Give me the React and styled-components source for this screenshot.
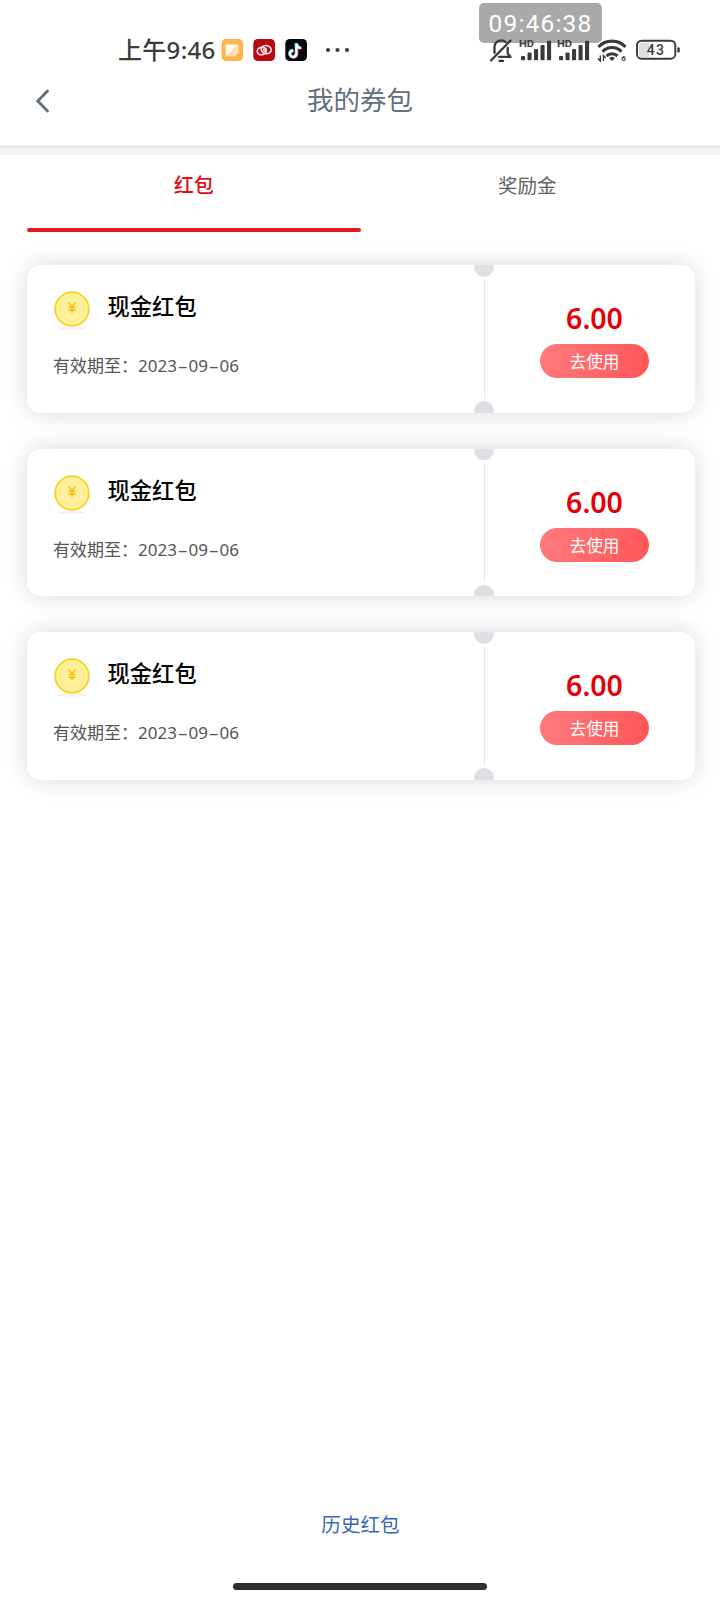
import React from "react";
import styled, { createGlobalStyle, css } from "styled-components";

const GlobalStyle = createGlobalStyle`
	* {
		box-sizing: border-box;
	}

	body {
		margin: 0;
		background: #fff;
		font-family: "Noto Sans", "Noto Sans CJK SC", sans-serif;
	}

	button {
		border: 0;
		padding: 0;
		background: none;
		font-family: inherit;
	}
`;

const Page = styled.div`
	display: flex;
	flex-direction: column;
	width: 720px;
	height: 1600px;
	overflow: hidden;
	background: #fff;
`;

const StatusBar = styled.div`
	position: relative;
	display: flex;
	justify-content: space-between;
	align-items: flex-end;
	height: 64px;
	padding: 0 40px 0 118px;
`;

const StatusGroup = styled.div`
	display: flex;
	align-items: center;
	height: 28px;
`;

const StatusTime = styled.span`
	width: 103px;
	color: #3c3c3c;
	font-size: 24px;
	font-weight: 500;
	letter-spacing: 0.3px;
	line-height: 28px;
	white-space: nowrap;
`;

const AppIcons = styled.svg`
	display: block;
	width: 130px;
	height: 28px;
`;

const SignalIcons = styled.svg`
	position: relative;
	z-index: 1;
	display: block;
	width: 192px;
	height: 28px;
	font-family: Roboto, sans-serif;
`;

// Floating clock overlay, sits over the status bar
const ClockBadge = styled.div`
	position: absolute;
	top: 3px;
	left: 479px;
	width: 123px;
	height: 40px;
	padding-top: 7px;
	border-radius: 5px;
	background: #a9a9a9;
	color: #fff;
	font-family: Roboto, sans-serif;
	font-size: 24.5px;
	letter-spacing: 1.2px;
	line-height: 28px;
	text-align: center;
	white-space: nowrap;
`;

const NavBar = styled.header`
	display: grid;
	grid-template-columns: 84px 1fr 84px;
	align-items: center;
	height: 81px;
	padding-bottom: 9px;
`;

const BackButton = styled.button`
	display: flex;
	padding: 1px 0 0 34px;

	svg {
		display: block;
	}
`;

const Title = styled.h1`
	margin: 0;
	color: #627180;
	font-size: 26.5px;
	font-weight: 400;
	line-height: 36px;
	text-align: center;
`;

const Band = styled.div`
	height: 10px;
	background: linear-gradient(#eeeeee 3px, #f3f3f3 4px);
`;

const Tabs = styled.nav`
	display: grid;
	grid-template-columns: 1fr 1fr;
	height: 77px;
	padding: 0 26px 0 27px;
`;

const Tab = styled.button`
	display: flex;
	flex-direction: column;
	align-items: center;
	justify-content: space-between;
	height: 76.5px;
	color: #626262;
	font-size: 19.5px;
	line-height: 62px;

	${({ $active }) =>
		$active &&
		css`
			color: #de1015;
			font-size: 20px;
			font-weight: 500;
		`}
`;

const TabLine = styled.span`
	width: 100%;
	height: 3.5px;
	border-radius: 2px;
	background: #e01a1f;
`;

const CouponList = styled.main`
	display: flex;
	flex: 1;
	flex-direction: column;
	gap: 36px;
	padding: 33px 25.5px 0 27px;
`;

const Card = styled.article`
	display: grid;
	grid-template-columns: 446.5px 20px 1fr;
	height: 147.6px;
	border-radius: 14px;
	background: #fff;
	box-shadow: 0 0 23px rgba(0, 0, 0, 0.15);
`;

const CardInfo = styled.div`
	padding: 23px 0 0 26px;
`;

const CardHead = styled.div`
	display: flex;
	gap: 16.5px;
	height: 44px;
`;

const CardTitle = styled.h2`
	margin: 0;
	color: #050505;
	font-size: 22.3px;
	font-weight: 500;
	line-height: 38px;
`;

const Validity = styled.p`
	display: flex;
	margin: 21px 0 0;
	color: #555;
	font-size: 17px;
	line-height: 26px;
	white-space: nowrap;
`;

const Dash = styled.span`
	display: inline-block;
	width: 11.6px;
	text-align: center;
	transform: scaleX(1.9);
`;

const Perforation = styled.div`
	display: flex;
	flex-direction: column;
	align-items: center;
	justify-content: space-between;
`;

const Notch = styled.span`
	width: 20px;
	height: 11.5px;
	background: #dddfe4;
	border-radius: ${({ $end }) => ($end ? "10px 10px 2px 2px" : "2px 2px 10px 10px")};
`;

const Line = styled.span`
	width: 1px;
	height: 120px;
	margin-left: 1px;
	background: #e6e7ea;
`;

const CardAction = styled.div`
	display: flex;
	flex-direction: column;
	align-items: center;
	padding: 35px 0 0 1px;
`;

const Amount = styled.strong`
	height: 44px;
	color: #e60008;
	font-size: 28.5px;
	font-weight: 600;
	line-height: 37px;
`;

const UseButton = styled.button`
	width: 109px;
	height: 34px;
	border-radius: 17px;
	background: linear-gradient(100deg, #ff7b7d, #ff5658);
	color: #fff;
	font-size: 16.7px;
	line-height: 35px;
`;

const Footer = styled.footer`
	display: flex;
	flex-direction: column;
	align-items: center;
	padding-bottom: 10.5px;
`;

const HistoryLink = styled.button`
	display: flex;
	height: 73px;
	padding-left: 1px;
	color: #3768b5;
	font-size: 19.6px;
	line-height: 30px;
`;

const HomeBar = styled.div`
	width: 254px;
	height: 6.5px;
	border-radius: 4px;
	background: #303030;
`;

const coupons = [
	{ id: 1, title: "现金红包", date: "2023-09-06", amount: "6.00" },
	{ id: 2, title: "现金红包", date: "2023-09-06", amount: "6.00" },
	{ id: 3, title: "现金红包", date: "2023-09-06", amount: "6.00" },
];

function RunningApps() {
	return (
		<AppIcons viewBox='221 36 130 28'>
			<defs>
				<linearGradient id='note' x1='0' y1='0' x2='1' y2='1'>
					<stop offset='0' stopColor='#fff' />
					<stop offset='1' stopColor='#fff0d8' />
				</linearGradient>
			</defs>
			<rect x='221.5' y='39' width='21.5' height='22' rx='4.5' fill='#ffb450' />
			<path d='M238.500 44.500v8.500l-3.500 3.500h-9z' fill='#ffd294' />
			<path d='M225.500 44.500h13L226 57z' fill='url(#note)' />
			<path d='M238.500 44.500v8l-3.500 3.500h-6z' fill='#ffe2b8' />
			<rect x='253.3' y='39' width='21.7' height='22' rx='4.5' fill='#b80812' />
			<g fill='none' stroke='#ffeaea' strokeWidth='1.6'>
				<ellipse cx='261.8' cy='51' rx='4.6' ry='3.7' transform='rotate(-12 261.800 51)' />
				<ellipse cx='266.2' cy='49.6' rx='5' ry='4' transform='rotate(12 266.200 49.600)' />
				<circle cx='264.8' cy='50' r='1.3' />
			</g>
			<rect x='285.3' y='39' width='21.7' height='22' rx='4.5' fill='#07070f' />
			<g fill='none' strokeWidth='2.3'>
				<path d='M295.800 43v10.300a3.300 3.300 0 1 1-3.300-3.300M295.800 43q.5 4 4.500 4.500' stroke='#25e4e2' />
				<path d='M297.200 44v10.300a3.300 3.300 0 1 1-3.300-3.300M297.200 44q.5 4 4.500 4.500' stroke='#f43563' />
				<path d='M296.500 43.500v10.300a3.300 3.300 0 1 1-3.300-3.300M296.500 43.500q.5 4 4.500 4.500' stroke='#fff' />
			</g>
			<g fill='#3c3c3c'>
				<circle cx='328' cy='50' r='2.1' />
				<circle cx='337.5' cy='50' r='2.1' />
				<circle cx='347' cy='50' r='2.1' />
			</g>
		</AppIcons>
	);
}

function Signal({ x }) {
	return (
		<g transform={`translate(${x} 0)`} fill='#3a3a3a'>
			<text x='-2' y='46.5' fontSize='9.2' fontWeight='700' textLength='15' lengthAdjust='spacingAndGlyphs'>
				HD
			</text>
			<rect x='0' y='56' width='4.1' height='4.2' rx='1' />
			<rect x='6.5' y='52.5' width='4.1' height='7.7' rx='1' />
			<rect x='13' y='49' width='4.1' height='11.2' rx='1' />
			<rect x='19.5' y='45' width='4.1' height='15.2' rx='1' />
			<rect x='26' y='40.7' width='4.1' height='19.5' rx='1' />
		</g>
	);
}

function SystemIcons() {
	return (
		<SignalIcons viewBox='488 36 192 28'>
			<g fill='none' stroke='#3a3a3a' strokeWidth='2.3' strokeLinecap='round' strokeLinejoin='round'>
				<path d='M491 60.500 510.500 40.500' />
				<path d='M494.500 53v-6a6.700 6.700 0 0 1 11-5M507.700 48v5.500l2.800 3.300h-11.500' />
				<path d='M499.500 60.900h3.500' />
			</g>
			<Signal x={521} />
			<Signal x={559} />
			<g fill='none' stroke='#3a3a3a' strokeWidth='3.1'>
				<path d='M598.500 47a18.500 18.500 0 0 1 27 0' />
				<path d='M602.500 51.700a13 13 0 0 1 19 0' />
				<path d='M606.500 56a8 8 0 0 1 11 0' />
			</g>
			<path d='M609 58q3-2 6 0l-3 3z' fill='#3a3a3a' />
			<path d='M600.300 55.500v5.500l-2.300-2.500M603.500 61v-5.500l2.300 2.500' stroke='#3a3a3a' strokeWidth='1.4' fill='none' />
			<text x='621.3' y='60.5' fontSize='8' fontWeight='700' fill='#3a3a3a'>
				6
			</text>
			<path d='M641 42.500h8v14.500h-8q-2 0-2-2v-10.500q0-2 2-2z' fill='#dedede' />
			<rect x='637' y='40.7' width='38.3' height='18' rx='4.5' fill='none' stroke='#3a3a3a' strokeWidth='1.9' />
			<path d='M677.300 47.500h1.500q1 0 1 1v3q0 1-1 1h-1.500z' fill='#3a3a3a' />
			<text x='656' y='55' fontSize='14' fontWeight='500' letterSpacing='1.2' textAnchor='middle' fill='#3a3a3a'>
				43
			</text>
		</SignalIcons>
	);
}

function Coin() {
	return (
		<svg width='38' height='44' viewBox='53 288 38 44'>
			<ellipse cx='72' cy='328' rx='14' ry='1.7' fill='#f3f1f1' />
			<circle cx='72' cy='309' r='16.8' fill='#fff09b' stroke='#f5d51f' strokeWidth='1.8' />
			<circle cx='72' cy='309' r='12' fill='none' stroke='#fdea88' strokeWidth='1' />
			<path
				d='m68.500 302.500 3.500 4.500 3.500-4.500M72 307v6M68.300 307.500h7.400M68.300 310.300h7.400'
				fill='none'
				stroke='#f2bd17'
				strokeWidth='1.5'
			/>
		</svg>
	);
}

function Coupon({ title, date, amount }) {
	return (
		<Card>
			<CardInfo>
				<CardHead>
					<Coin />
					<CardTitle>{title}</CardTitle>
				</CardHead>
				<Validity>
					有效期至：
					<span>
						{date.split("-").map((part, i) => (
							<React.Fragment key={i}>
								{i > 0 && <Dash>-</Dash>}
								{part}
							</React.Fragment>
						))}
					</span>
				</Validity>
			</CardInfo>
			<Perforation>
				<Notch />
				<Line />
				<Notch $end />
			</Perforation>
			<CardAction>
				<Amount>{amount}</Amount>
				<UseButton>去使用</UseButton>
			</CardAction>
		</Card>
	);
}

function App() {
	return (
		<Page>
			<GlobalStyle />
			<StatusBar>
				<StatusGroup>
					<StatusTime>上午9:46</StatusTime>
					<RunningApps />
				</StatusGroup>
				<ClockBadge>09:46:38</ClockBadge>
				<SystemIcons />
			</StatusBar>
			<NavBar>
				<BackButton aria-label='返回'>
					<svg width='18' height='26' viewBox='0 0 18 26'>
						<path d='M13.500 3 3.800 13l9.700 10' fill='none' stroke='#627180' strokeWidth='2.9' strokeLinecap='round' />
					</svg>
				</BackButton>
				<Title>我的券包</Title>
			</NavBar>
			<Band />
			<Tabs>
				<Tab $active>
					红包
					<TabLine />
				</Tab>
				<Tab>奖励金</Tab>
			</Tabs>
			<CouponList>
				{coupons.map(coupon => (
					<Coupon key={coupon.id} {...coupon} />
				))}
			</CouponList>
			<Footer>
				<HistoryLink>历史红包</HistoryLink>
				<HomeBar />
			</Footer>
		</Page>
	);
}

export default App;
